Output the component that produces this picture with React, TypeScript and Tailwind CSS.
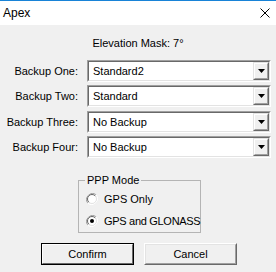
import React from "react";

const font = { fontFamily: '"Liberation Sans", Arial, sans-serif' };

type Row = { label: string; value: string; mt: string };

const rows: Row[] = [
  { label: "Backup One:", value: "Standard2", mt: "mt-0" },
  { label: "Backup Two:", value: "Standard", mt: "mt-[3px]" },
  { label: "Backup Three:", value: "No Backup", mt: "mt-[4px]" },
  { label: "Backup Four:", value: "No Backup", mt: "mt-[3px]" },
];

function Combo({ value }: { value: string }) {
  return (
    <div className="h-[22px] w-[184px] border border-t-[#a0a0a0] border-l-[#a0a0a0] border-r-white border-b-white">
      <div className="flex h-full w-full border border-t-[#696969] border-l-[#696969] border-r-[#e3e3e3] border-b-[#e3e3e3] bg-white">
        <div className="flex flex-1 items-center pl-[4px] text-[11px] text-black">{value}</div>
        <div className="h-full w-[16px] border border-t-[#e3e3e3] border-l-[#e3e3e3] border-r-[#696969] border-b-[#696969]">
          <div className="flex h-full w-full items-center justify-center border border-t-white border-l-white border-r-[#a0a0a0] border-b-[#a0a0a0] bg-[#f0f0f0]">
            <svg width="7" height="4" viewBox="0 0 7 4">
              <path d="M0 0h7L3.5 4z" fill="#000" />
            </svg>
          </div>
        </div>
      </div>
    </div>
  );
}

function Radio({ checked }: { checked: boolean }) {
  return (
    <svg width="12" height="12" viewBox="0 0 12 12" className="shrink-0">
      <path d="M10.2 1.8A6 6 0 0 0 1.8 10.2" stroke="#a0a0a0" strokeWidth="1" fill="none" />
      <path d="M1.8 10.2A6 6 0 0 0 10.2 1.8" stroke="#ffffff" strokeWidth="1" fill="none" />
      <circle cx="6" cy="6" r="4.5" fill="#fff" stroke="#e3e3e3" strokeWidth="1" />
      <path d="M9.2 2.8A4.5 4.5 0 0 0 2.8 9.2" stroke="#696969" strokeWidth="1" fill="none" />
      {checked && <circle cx="6" cy="6" r="2" fill="#000" />}
    </svg>
  );
}

function Button({ label, isDefault }: { label: string; isDefault?: boolean }) {
  const outer = isDefault
    ? "border-black"
    : "border-t-white border-l-white border-r-[#696969] border-b-[#696969]";
  const inner = isDefault
    ? "border-t-white border-l-white border-r-[#696969] border-b-[#696969]"
    : "border-t-[#e3e3e3] border-l-[#e3e3e3] border-r-[#a0a0a0] border-b-[#a0a0a0]";
  return (
    <div className={`h-[22px] w-[93px] border ${outer}`}>
      <div className={`flex h-full w-full items-center justify-center border ${inner} bg-[#f0f0f0] text-[11px] text-black`}>
        {label}
      </div>
    </div>
  );
}

export default function App() {
  return (
    <div className="flex h-[272px] w-[276px] flex-col overflow-hidden bg-[#f0f0f0]" style={font}>
      <div className="flex h-[25px] items-center justify-between border-t border-[#1883d7] bg-white pl-[3px] pr-[6px]">
        <span className="text-[12px] text-black">Apex</span>
        <svg width="10" height="10" viewBox="0 0 10 10">
          <path d="M0.5 0.5l9 9M9.5 0.5l-9 9" stroke="#000" strokeWidth="1" />
        </svg>
      </div>

      <div className="mt-[12px] h-[13px] text-center text-[11px] leading-[13px] text-black">Elevation Mask: 7°</div>

      <div className="mt-[10px] flex flex-col">
        {rows.map((r) => (
          <div key={r.label} className={`flex items-center ${r.mt}`}>
            <div className="w-[79px] pr-[1px] text-right text-[11px] text-black">{r.label}</div>
            <div className="ml-[8px]">
              <Combo value={r.value} />
            </div>
          </div>
        ))}
      </div>

      <fieldset className="ml-[78px] mt-[16px] h-[59px] w-[121px] border border-[#b4b4b4] pl-[7px]">
        <legend className="-ml-px px-[2px] text-[11px] leading-[13px] text-black">PPP Mode</legend>
        <div className="mt-[4px] flex items-center gap-[6px] whitespace-nowrap text-[11px] text-black">
          <Radio checked={false} />
          <span>GPS Only</span>
        </div>
        <div className="mt-[5px] flex items-center gap-[6px] whitespace-nowrap text-[11px] tracking-[-0.3px] text-black">
          <Radio checked />
          <span>GPS and GLONASS</span>
        </div>
      </fieldset>

      <div className="ml-[41px] mt-[10px] flex gap-[10px]">
        <Button label="Confirm" isDefault />
        <Button label="Cancel" />
      </div>
    </div>
  );
}
